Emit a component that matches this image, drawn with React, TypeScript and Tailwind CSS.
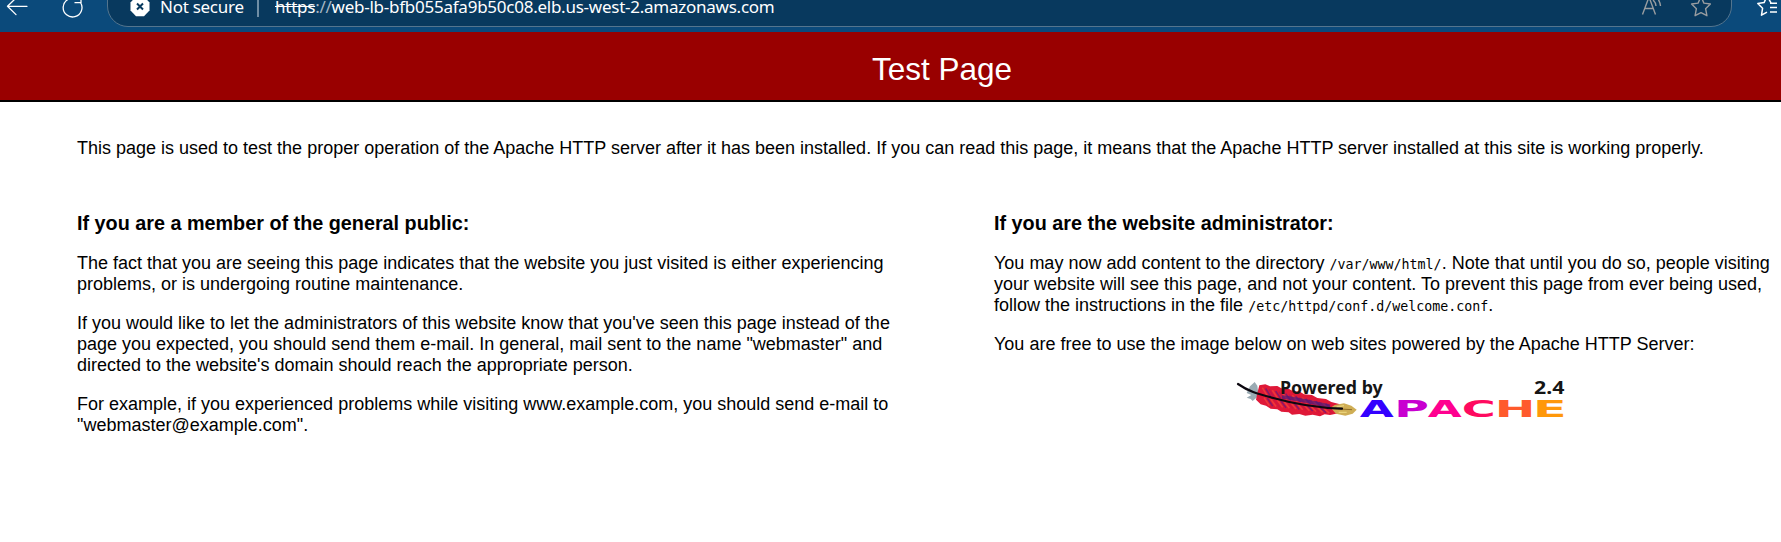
import type { ReactNode } from "react";

const letters = [
  { c: "A", x: 419, w: 102, fill: "#3300ff" },
  { c: "P", x: 523, w: 104, fill: "#c800d0" },
  { c: "A", x: 623, w: 102, fill: "#ff0090" },
  { c: "C", x: 725, w: 102, fill: "#ff0a60" },
  { c: "H", x: 824, w: 122, fill: "#ff5a2c" },
  { c: "E", x: 939, w: 101, fill: "#ff980a" },
];

const barbs = Array.from({ length: 20 }, (_, i) => i);

function Feather() {
  return (
    <g>
      <path d="M90 64 L104 51 L112 62 L116 92 L98 108 L92 102 L80 98 L94 90 L80 84Z" fill="#9aabb3" />
      <path
        d="M118 61 L136 58 L150 64 L172 63 L184 70 L206 71 L218 78 L240 80 L252 88 L276 90 L292 99 L318 102 L334 111 L360 118 L352 132 L372 146 L348 146 L330 150 L314 148 L300 154 L278 149 L256 152 L238 147 L216 149 L206 142 L184 140 L172 133 L152 131 L138 122 L122 118 L108 104 L112 84Z"
        fill="#df1838"
      />
      {barbs.map((i) => (
        <g key={i} strokeWidth="4.5" fill="none">
          <path
            d={`M${142 + i * 10} ${93 + i * 1.9} l${-15} ${-25 + i * 0.65}`}
            stroke={i % 3 === 0 ? "#f2443a" : i % 3 === 1 ? "#6a1a78" : "#b81650"}
            opacity="0.75"
          />
          <path
            d={`M${132 + i * 10} ${98 + i * 1.8} l16 ${24 - i * 0.55}`}
            stroke={i % 4 === 1 ? "#6a1a78" : i % 2 === 0 ? "#f4453a" : "#cc1740"}
            opacity="0.75"
          />
        </g>
      ))}
      <path d="M186 96 C220 100 270 110 330 124" stroke="#4b1a7c" strokeWidth="11" fill="none" opacity="0.7" />
      <path d="M332 128 L344 120 L372 115 L394 122 L410 134 L398 146 L376 152 L348 146Z" fill="#cfae55" />
      <path d="M350 126 L372 122 M356 142 L380 142" stroke="#e9d27a" strokeWidth="4" />
      <path d="M340 131 L396 134" stroke="#8f6d26" strokeWidth="3" />
      <path d="M54 57 C84 78 110 86 160 99 C220 116 280 128 366 131" stroke="#0c0810" strokeWidth="6.5" fill="none" strokeLinecap="round" />
    </g>
  );
}

function ApacheLogo() {
  return (
    <svg width="360" height="65" viewBox="0 0 1080 195" role="img" aria-label="Powered by Apache 2.4">
      <Feather />
      <g fontFamily="Noto Sans, sans-serif" fontWeight="700" fontSize="54" fill="#151515">
        <text x="180" y="86" textLength="308" lengthAdjust="spacingAndGlyphs">Powered by</text>
        <text x="942" y="87" textLength="91" lengthAdjust="spacingAndGlyphs">2.4</text>
      </g>
      <g fontFamily="DejaVu Sans, sans-serif" fontWeight="700" fontSize="69">
        {letters.map((l) => (
          <text key={l.x} x={l.x} y="155" fill={l.fill} textLength={l.w} lengthAdjust="spacingAndGlyphs">
            {l.c}
          </text>
        ))}
      </g>
    </svg>
  );
}

const star = "M10 -4 L12.9 2.6 L19.4 3.5 L14.6 8.2 L15.9 15.2 L10 12.2 L4.1 15.2 L5.4 8.2 L0.6 3.5 L7.1 2.6Z";

function BrowserBar() {
  return (
    <div className="flex h-8 items-start overflow-hidden bg-[#0b4a7b] text-white">
      <svg className="shrink-0" width="107" height="32" fill="none" stroke="#fff" strokeWidth="1.3" strokeLinecap="round" strokeLinejoin="round">
        <path d="M27 6.3 H7.5 M16 -2 L7.5 6.3 L16 14.6" />
        <path d="M80.5 2.5 A9.4 9.4 0 1 1 76 -1.2 M81 -4 V2.7 H75" />
      </svg>
      <div className="-mt-4 flex h-[43px] w-[1625px] shrink-0 items-start rounded-b-[21px] border border-[#54758e] bg-[#08395e] pt-[15px]">
        <svg className="ml-[21px] shrink-0" width="22" height="18">
          <path d="M7 -3.5 H15 L20.5 2.5 V10.5 L15 16.2 H7 L1.5 10.5 V2.5Z" fill="#fff" />
          <path d="M8 3.5 L14 9.5 M14 3.5 L8 9.5" stroke="#08395e" strokeWidth="2" />
        </svg>
        <span className="ml-[9px] w-[97px] shrink-0 font-['Noto_Sans'] text-[17px] leading-[14px] tracking-[-0.27px] whitespace-nowrap">Not secure</span>
        <span className="h-[17px] w-[2px] shrink-0 bg-[#6f8ea5]" />
        <span className="ml-4 shrink-0 font-['Noto_Sans'] text-[17px] leading-[14px] tracking-[-0.25px] whitespace-nowrap">
          <span className="line-through">https</span>
          <span className="text-[#a5b6c3]">://</span>web-lb-bfb055afa9b50c08.elb.us-west-2.amazonaws.com
        </span>
        <svg className="mr-5 ml-auto shrink-0" width="70" height="20" fill="none" stroke="#999da0" strokeWidth="1.4" strokeLinejoin="round">
          <path d="M1.5 14.5 L8 -3 L14.5 14.5 M4 8.5 H12 M12 0 Q14.5 2 15 6 M15.5 -3 Q19 1 19.5 6" />
          <path d={star} transform="translate(50 .5)" />
        </svg>
      </div>
      <svg className="ml-[25px] shrink-0" width="24" height="20" fill="none" stroke="#fff" strokeWidth="1.5" strokeLinejoin="round">
        <path d="M14 2.8 L10 -4 L7.1 2.6 L0.8 3.5 L5.6 8.2 L4.5 15.2 L10 12.2 M13 3.2 H20 M13 7.5 H20 M13 12 H20" />
      </svg>
    </div>
  );
}

function Lines({ rows }: { rows: ReactNode[] }) {
  return (
    <p className="mb-[18px] whitespace-nowrap">
      {rows.map((row, i) => (
        <span key={i} className="block h-[21px]">{row}</span>
      ))}
    </p>
  );
}

function Code({ children }: { children: ReactNode }) {
  return <code className="font-['DejaVu_Sans_Mono'] text-[13.3px] leading-[18px]">{children}</code>;
}

export default function App() {
  return (
    <div className="h-[542px] overflow-hidden bg-white font-['Liberation_Sans'] text-[18px] leading-[21px] text-black">
      <BrowserBar />
      <header className="h-[70px] border-b-2 border-black bg-[#990000] pt-[19px] text-center text-[31.5px] leading-9 text-white">
        <h1 className="pl-[103px]">Test Page</h1>
      </header>
      <main className="pt-9 pl-[77px]">
        <p className="whitespace-nowrap">
          This page is used to test the proper operation of the Apache HTTP server after it has been installed. If you can read this page, it means that the Apache HTTP server installed at this site is working properly.
        </p>
        <div className="mt-[53px] flex">
          <section className="w-[917px] shrink-0">
            <h2 className="mb-[18px] text-[19.8px] leading-[23px] font-bold">If you are a member of the general public:</h2>
            <Lines rows={["The fact that you are seeing this page indicates that the website you just visited is either experiencing", "problems, or is undergoing routine maintenance."]} />
            <Lines rows={["If you would like to let the administrators of this website know that you've seen this page instead of the", "page you expected, you should send them e-mail. In general, mail sent to the name \"webmaster\" and", "directed to the website's domain should reach the appropriate person."]} />
            <Lines rows={["For example, if you experienced problems while visiting www.example.com, you should send e-mail to", "\"webmaster@example.com\"."]} />
          </section>
          <section className="shrink-0">
            <h2 className="mb-[18px] text-[19.8px] leading-[23px] font-bold">If you are the website administrator:</h2>
            <Lines
              rows={[
                <>You may now add content to the directory <Code>/var/www/html/</Code>. Note that until you do so, people visiting</>,
                "your website will see this page, and not your content. To prevent this page from ever being used,",
                <>follow the instructions in the file <Code>/etc/httpd/conf.d/welcome.conf</Code>.</>,
              ]}
            />
            <Lines rows={["You are free to use the image below on web sites powered by the Apache HTTP Server:"]} />
            <div className="-mt-2 ml-[226px]">
              <ApacheLogo />
            </div>
          </section>
        </div>
      </main>
    </div>
  );
}
